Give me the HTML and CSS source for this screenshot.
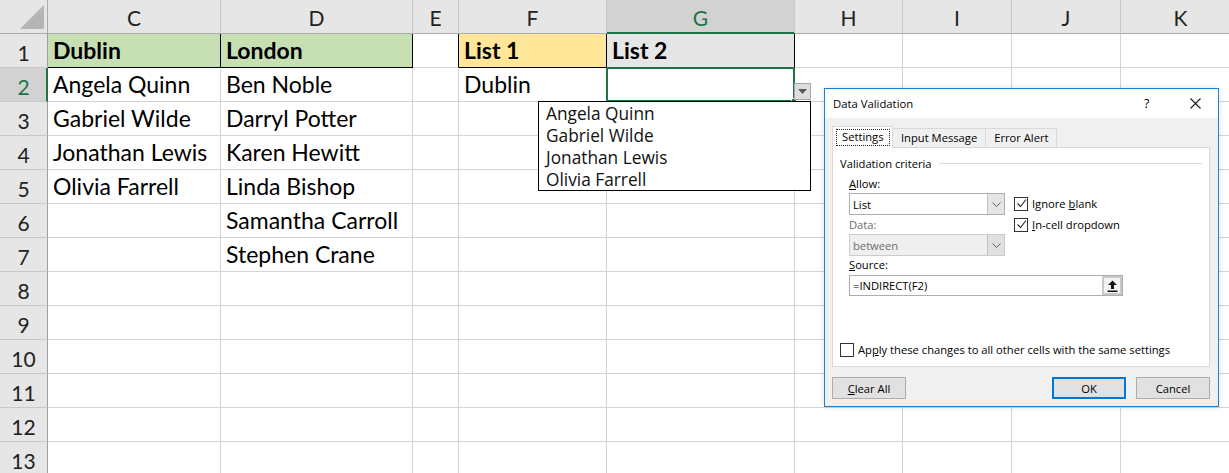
FILE: index.html
```html
<!DOCTYPE html>
<html lang="en">
<head>
    <meta charset="UTF-8">
    <meta name="viewport" content="width=device-width, initial-scale=1.0">
    <title>Dependent Drop Down - Data Validation</title>
    <link rel="stylesheet" href="styles.css">
</head>
<body>
<div class="sheet">
    <div class="grid">
        <!-- column headers -->
        <div class="corner"><span class="corner-tri"></span></div>
        <div class="col-head">C</div>
        <div class="col-head">D</div>
        <div class="col-head">E</div>
        <div class="col-head">F</div>
        <div class="col-head active">G</div>
        <div class="col-head">H</div>
        <div class="col-head">I</div>
        <div class="col-head">J</div>
        <div class="col-head">K</div>

        <!-- row 1 -->
        <div class="row-head">1</div>
        <div class="cell title green boxed">Dublin</div>
        <div class="cell title green boxed">London</div>
        <div class="cell edge-r"></div>
        <div class="cell title yellow boxed">List 1</div>
        <div class="cell title grey boxed">List 2</div>
        <div class="cell"></div>
        <div class="cell"></div>
        <div class="cell"></div>
        <div class="cell"></div>

        <!-- row 2 -->
        <div class="row-head active">2</div>
        <div class="cell">Angela Quinn</div>
        <div class="cell">Ben Noble</div>
        <div class="cell"></div>
        <div class="cell">Dublin</div>
        <div class="cell"></div>
        <div class="cell"></div>
        <div class="cell"></div>
        <div class="cell"></div>
        <div class="cell"></div>

        <!-- row 3 -->
        <div class="row-head">3</div>
        <div class="cell">Gabriel Wilde</div>
        <div class="cell">Darryl Potter</div>
        <div class="cell"></div>
        <div class="cell"></div>
        <div class="cell"></div>
        <div class="cell"></div>
        <div class="cell"></div>
        <div class="cell"></div>
        <div class="cell"></div>

        <!-- row 4 -->
        <div class="row-head">4</div>
        <div class="cell">Jonathan Lewis</div>
        <div class="cell">Karen Hewitt</div>
        <div class="cell"></div>
        <div class="cell"></div>
        <div class="cell"></div>
        <div class="cell"></div>
        <div class="cell"></div>
        <div class="cell"></div>
        <div class="cell"></div>

        <!-- row 5 -->
        <div class="row-head">5</div>
        <div class="cell">Olivia Farrell</div>
        <div class="cell">Linda Bishop</div>
        <div class="cell"></div>
        <div class="cell"></div>
        <div class="cell"></div>
        <div class="cell"></div>
        <div class="cell"></div>
        <div class="cell"></div>
        <div class="cell"></div>

        <!-- row 6 -->
        <div class="row-head">6</div>
        <div class="cell"></div>
        <div class="cell">Samantha Carroll</div>
        <div class="cell"></div>
        <div class="cell"></div>
        <div class="cell"></div>
        <div class="cell"></div>
        <div class="cell"></div>
        <div class="cell"></div>
        <div class="cell"></div>

        <!-- row 7 -->
        <div class="row-head">7</div>
        <div class="cell"></div>
        <div class="cell">Stephen Crane</div>
        <div class="cell"></div>
        <div class="cell"></div>
        <div class="cell"></div>
        <div class="cell"></div>
        <div class="cell"></div>
        <div class="cell"></div>
        <div class="cell"></div>

        <!-- rows 8 - 13 -->
        <div class="row-head">8</div>
        <div class="cell"></div><div class="cell"></div><div class="cell"></div><div class="cell"></div><div class="cell"></div><div class="cell"></div><div class="cell"></div><div class="cell"></div><div class="cell"></div>
        <div class="row-head">9</div>
        <div class="cell"></div><div class="cell"></div><div class="cell"></div><div class="cell"></div><div class="cell"></div><div class="cell"></div><div class="cell"></div><div class="cell"></div><div class="cell"></div>
        <div class="row-head">10</div>
        <div class="cell"></div><div class="cell"></div><div class="cell"></div><div class="cell"></div><div class="cell"></div><div class="cell"></div><div class="cell"></div><div class="cell"></div><div class="cell"></div>
        <div class="row-head">11</div>
        <div class="cell"></div><div class="cell"></div><div class="cell"></div><div class="cell"></div><div class="cell"></div><div class="cell"></div><div class="cell"></div><div class="cell"></div><div class="cell"></div>
        <div class="row-head">12</div>
        <div class="cell"></div><div class="cell"></div><div class="cell"></div><div class="cell"></div><div class="cell"></div><div class="cell"></div><div class="cell"></div><div class="cell"></div><div class="cell"></div>
        <div class="row-head">13</div>
        <div class="cell"></div><div class="cell"></div><div class="cell"></div><div class="cell"></div><div class="cell"></div><div class="cell"></div><div class="cell"></div><div class="cell"></div><div class="cell"></div>
    </div>

    <!-- active cell G2 with its in-cell dropdown -->
    <div class="sel-box"><span class="sel-handle"></span></div>
    <div class="dd-btn">
        <svg width="9" height="5" viewBox="0 0 9 5"><path d="M0 0h9L4.5 5z" fill="#595959"/></svg>
    </div>
    <ul class="dd-list">
        <li>Angela Quinn</li>
        <li>Gabriel Wilde</li>
        <li>Jonathan Lewis</li>
        <li>Olivia Farrell</li>
    </ul>

    <!-- Data Validation dialog -->
    <div class="dialog">
        <div class="dlg-title">
            <span class="dlg-name">Data Validation</span>
            <span class="dlg-help">?</span>
            <svg class="dlg-close" width="11" height="11" viewBox="0 0 11 11">
                <path d="M0.5 0.5l10 10M10.5 0.5l-10 10" stroke="#1a1a1a" stroke-width="1.1" fill="none"/>
            </svg>
        </div>
        <div class="dlg-body">
            <div class="tabs">
                <div class="tab active"><span class="focus">Settings</span></div>
                <div class="tab">Input Message</div>
                <div class="tab">Error Alert</div>
            </div>
            <div class="panel">
                <div class="legend"><span>Validation criteria</span><i></i></div>
                <div class="criteria">
                    <div class="crit-left">
                        <div class="lbl lbl-allow"><u>A</u>llow:</div>
                        <div class="combo">
                            <span>List</span>
                            <span class="combo-btn">
                                <svg width="9" height="5" viewBox="0 0 9 5"><path d="M0.5 0.5l4 4 4-4" stroke="#606060" fill="none"/></svg>
                            </span>
                        </div>
                        <div class="lbl muted">Data:</div>
                        <div class="combo disabled">
                            <span>between</span>
                            <span class="combo-btn">
                                <svg width="9" height="5" viewBox="0 0 9 5"><path d="M0.5 0.5l4 4 4-4" stroke="#606060" fill="none"/></svg>
                            </span>
                        </div>
                    </div>
                    <div class="crit-right">
                        <div class="check">
                            <span class="box"><svg width="11" height="11" viewBox="0 0 11 11"><path d="M1.5 5.5l3 3 5.5-7" stroke="#222" stroke-width="1.1" fill="none"/></svg></span>
                            <span>Ignore <u>b</u>lank</span>
                        </div>
                        <div class="check">
                            <span class="box"><svg width="11" height="11" viewBox="0 0 11 11"><path d="M1.5 5.5l3 3 5.5-7" stroke="#222" stroke-width="1.1" fill="none"/></svg></span>
                            <span><u>I</u>n-cell dropdown</span>
                        </div>
                    </div>
                </div>
                <div class="lbl lbl-source"><u>S</u>ource:</div>
                <div class="source">
                    <span>=INDIRECT(F2)</span>
                    <span class="source-btn">
                        <svg width="11" height="12" viewBox="0 0 11 12"><path d="M5.5 0.5L10 5H7v4H4V5H1z" fill="#111"/><rect x="0.5" y="10.5" width="10" height="1.5" fill="#111"/></svg>
                    </span>
                </div>
                <div class="check apply">
                    <span class="box"></span>
                    <span>Ap<u>p</u>ly these changes to all other cells with the same settings</span>
                </div>
            </div>
            <div class="buttons">
                <div class="btn"><u>C</u>lear All</div>
                <div class="btn-right">
                    <div class="btn default">OK</div>
                    <div class="btn">Cancel</div>
                </div>
            </div>
        </div>
    </div>
</div>
</body>
</html>
```

FILE: styles.css
```css
* {
    box-sizing: border-box;
}

body {
    margin: 0;
    background-color: #fff;
    font-family: "Lato", "Liberation Sans", sans-serif;
    color: #000;
}

.sheet {
    position: relative;
    width: 1229px;
    height: 473px;
    overflow: hidden;
}

/* worksheet grid */
.grid {
    display: grid;
    grid-template-columns: 48px 173px 192px 46px 148px 188px 108px 109px 109px 120px;
    grid-auto-rows: 34px;
}

.corner,
.col-head,
.row-head,
.cell {
    border-right: 1px solid #d4d4d4;
    border-bottom: 1px solid #d4d4d4;
    line-height: 1.2;
    white-space: nowrap;
}

.corner {
    display: flex;
    justify-content: flex-end;
    align-items: flex-end;
    padding: 0 3px 4px 0;
    background-color: #e6e6e6;
    border-right-color: #ababab;
    border-bottom-color: #ababab;
}

.corner-tri {
    width: 0;
    height: 0;
    border-left: 24px solid transparent;
    border-bottom: 24px solid #b5b5b5;
}

.col-head {
    display: flex;
    justify-content: center;
    align-items: flex-end;
    padding-bottom: 3px;
    background-color: #e6e6e6;
    border-right-color: #c8c8c8;
    border-bottom-color: #ababab;
    font-size: 21px;
    color: #222;
}

.col-head.active {
    background-color: #d2d2d2;
    color: #217346;
    border-bottom: 2px solid #217346;
    padding-bottom: 2px;
}

.row-head {
    display: flex;
    justify-content: center;
    align-items: flex-end;
    padding-bottom: 2px;
    background-color: #e6e6e6;
    border-right-color: #9e9e9e;
    border-bottom-color: #c8c8c8;
    font-size: 21px;
    color: #222;
}

.row-head.active {
    background-color: #d2d2d2;
    color: #217346;
    border-right: 2px solid #217346;
    padding-left: 1px;
}

.cell {
    display: flex;
    align-items: flex-end;
    padding: 0 0 2px 5px;
    font-size: 23px;
}

.cell.title {
    font-weight: bold;
}

.cell.green {
    background-color: #c6e0b4;
}

.cell.yellow {
    background-color: #ffe699;
}

.cell.grey {
    background-color: #e7e6e6;
}

.cell.boxed {
    border-right-color: #000;
    border-bottom-color: #000;
}

.cell.edge-r {
    border-right-color: #000;
}

/* active cell + in-cell dropdown */
.sel-box {
    position: absolute;
    left: 606px;
    top: 67px;
    width: 189px;
    height: 35px;
    border: 2px solid #217346;
}

.sel-handle {
    position: absolute;
    right: -4px;
    bottom: -4px;
    width: 6px;
    height: 6px;
    background-color: #217346;
    border: 1px solid #fff;
}

.dd-btn {
    position: absolute;
    left: 794px;
    top: 83px;
    width: 17px;
    height: 17px;
    display: flex;
    align-items: center;
    justify-content: center;
    background-color: #dedede;
    border: 1px solid #a6a6a6;
}

.dd-list {
    position: absolute;
    left: 538px;
    top: 101px;
    width: 273px;
    height: 90px;
    margin: 0;
    padding: 1px 0 0 7px;
    list-style: none;
    background-color: #fff;
    border: 1px solid #000;
    font-family: "Open Sans", "Noto Sans", sans-serif;
    font-size: 17.3px;
    line-height: 22px;
    color: #111;
}

/* dialog */
.dialog {
    position: absolute;
    left: 824px;
    top: 88px;
    width: 395px;
    height: 319px;
    display: flex;
    flex-direction: column;
    background-color: #f0f0f0;
    border: 1px solid #1883d7;
    font-family: "Open Sans", "Noto Sans", sans-serif;
    font-size: 11.2px;
    color: #000;
    box-shadow: 0 0 6px rgba(0, 0, 0, 0.12);
}

.dlg-title {
    height: 29px;
    display: flex;
    align-items: center;
    padding: 0 0 0 8px;
    background-color: #fff;
}

.dlg-name {
    flex: 1;
    font-size: 11.3px;
}

.dlg-help {
    width: 46px;
    font-size: 12.5px;
}

.dlg-close {
    margin-right: 17px;
}

.dlg-body {
    flex: 1;
    padding: 8px 8px 0 7px;
}

.tabs {
    display: flex;
    align-items: flex-end;
    height: 21px;
}

.tab {
    height: 19px;
    padding: 0 8px;
    line-height: 17px;
    border: 1px solid #d9d9d9;
    border-bottom: none;
    margin-left: -1px;
    background-color: #f0f0f0;
}

.tab.active {
    position: relative;
    z-index: 1;
    width: 61px;
    height: 22px;
    padding: 3px 3px 0 4px;
    margin-left: 0;
    margin-bottom: -1px;
    background-color: #fff;
}

.focus {
    display: block;
    height: 15px;
    padding: 0 5px;
    line-height: 14px;
    outline: 1px dotted #222;
}

.panel {
    height: 220px;
    padding: 0 7px;
    background-color: #fff;
    border: 1px solid #d9d9d9;
}

.legend {
    display: flex;
    align-items: center;
    height: 16px;
    margin-top: 7px;
}

.legend i {
    flex: 1;
    height: 1px;
    margin: 0 0 0 7px;
    background-color: #dcdcdc;
}

.criteria {
    display: flex;
    padding-left: 9px;
}

.crit-left {
    width: 156px;
}

.lbl {
    height: 16px;
    line-height: 16px;
}

.lbl-allow {
    margin-top: 5px;
}

.lbl.muted {
    margin-top: 2px;
    color: #6d6d6d;
}

.combo {
    height: 22px;
    margin-top: 1px;
    display: flex;
    align-items: center;
    padding-left: 3px;
    background-color: #fff;
    border: 1px solid #adadad;
}

.combo span:first-child {
    flex: 1;
}

.combo-btn {
    width: 17px;
    height: 20px;
    display: flex;
    align-items: center;
    justify-content: center;
    background-color: #e5e5e5;
    border-left: 1px solid #c4c4c4;
}

.combo.disabled {
    background-color: #efefef;
    border-color: #cccccc;
    color: #6d6d6d;
}

.combo.disabled .combo-btn {
    background-color: #e0e0e0;
}

.crit-right {
    padding: 22px 0 0 9px;
}

.check {
    display: flex;
    align-items: center;
    gap: 4px;
    height: 21px;
}

.box {
    width: 14px;
    height: 14px;
    display: flex;
    align-items: center;
    justify-content: center;
    background-color: #fff;
    border: 1px solid #333;
}

.lbl-source {
    margin: 1px 0 0 9px;
}

.source {
    width: 274px;
    height: 21px;
    margin: 2px 0 0 9px;
    display: flex;
    align-items: center;
    padding-left: 3px;
    border: 1px solid #adadad;
}

.source span:first-child {
    flex: 1;
}

.source-btn {
    width: 20px;
    height: 19px;
    display: flex;
    align-items: center;
    justify-content: center;
    background-color: #f4f4f4;
    border: 2px solid #c8c8c8;
}

.check.apply {
    margin-top: 43px;
}

.buttons {
    display: flex;
    justify-content: space-between;
    margin-top: 10px;
}

.btn-right {
    display: flex;
    gap: 10px;
}

.btn {
    width: 74px;
    height: 22px;
    display: flex;
    align-items: center;
    justify-content: center;
    background-color: #e1e1e1;
    border: 1px solid #adadad;
}

.btn.default {
    border: 2px solid #0078d7;
}
```
